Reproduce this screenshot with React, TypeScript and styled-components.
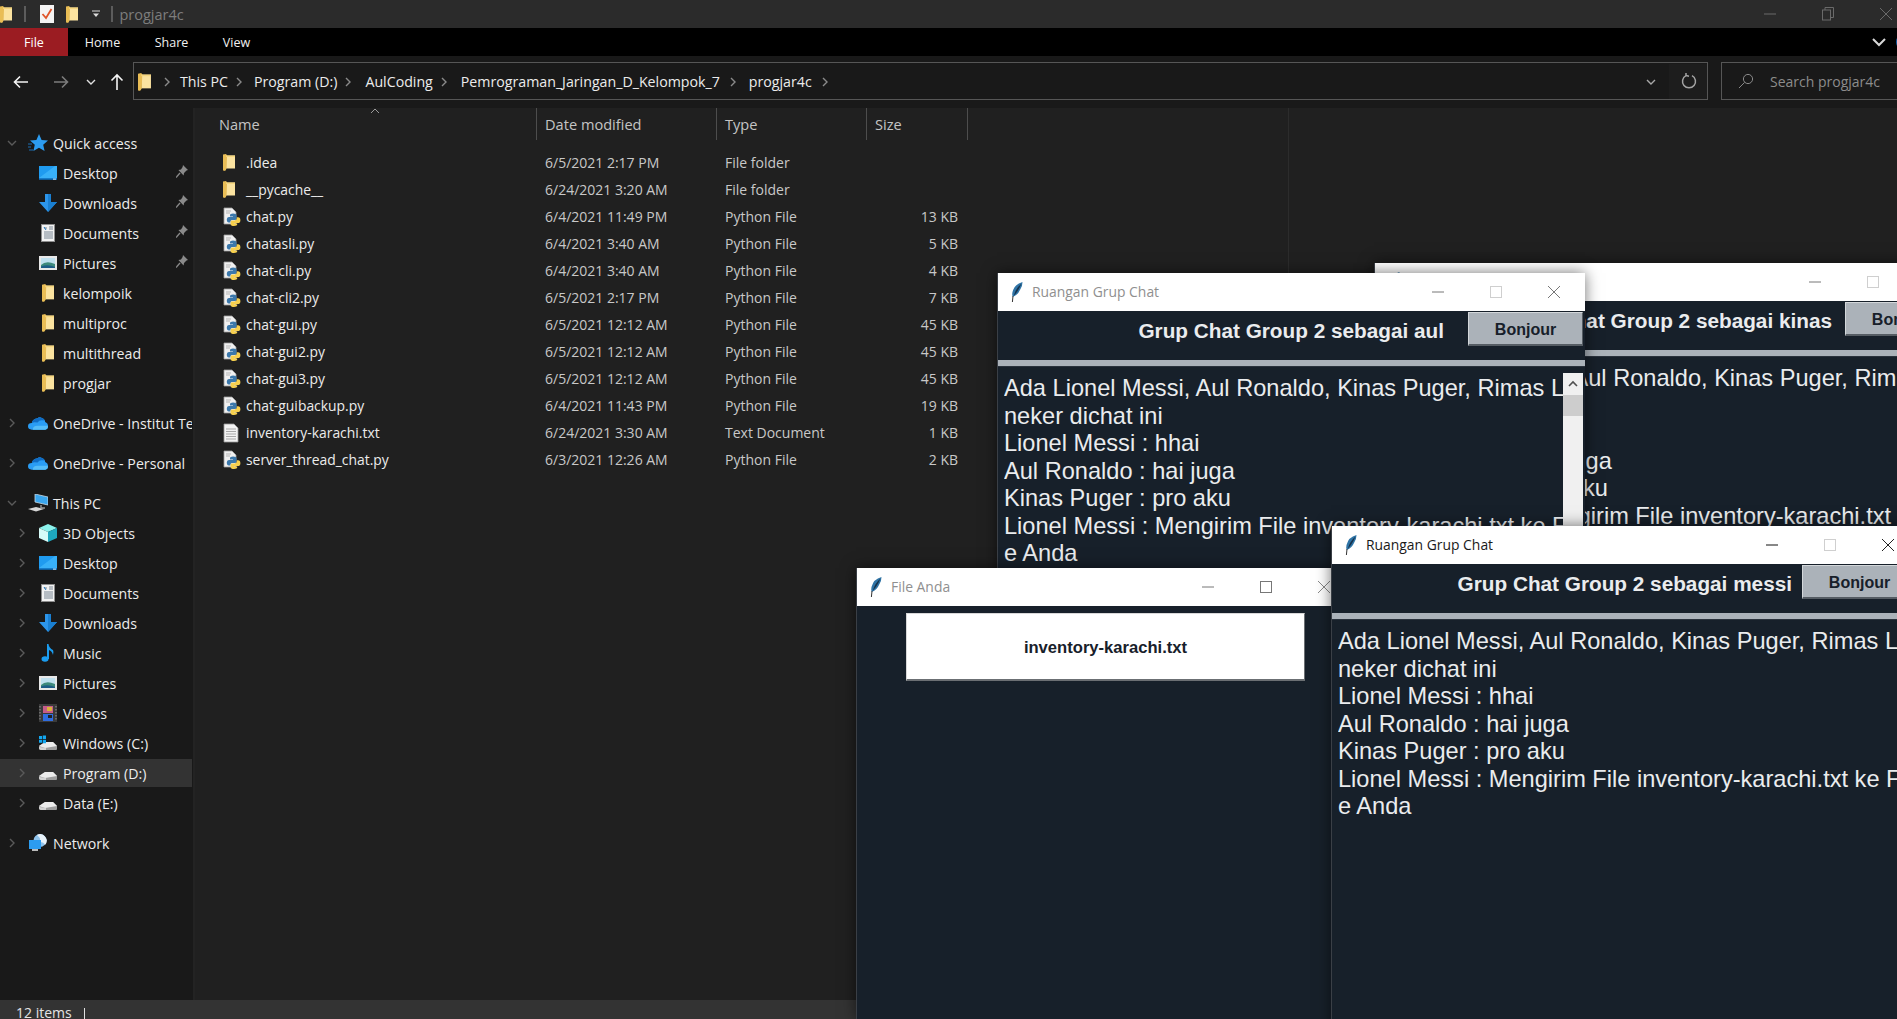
import React from "react";
import styled, { createGlobalStyle } from "styled-components";

const Global = createGlobalStyle`
  html, body { margin: 0; padding: 0; background: #202020; overflow: hidden; }
  * { box-sizing: border-box; }
`;

const UI = `"Open Sans", "Noto Sans", sans-serif`;
const TK = `"Liberation Sans", Arial, sans-serif`;

const Page = styled.div`
  position: relative; width: 1897px; height: 1019px; overflow: hidden;
  display: flex; flex-direction: column; background: #202020; font-family: ${UI}; font-size: 14px; color: #e6e6e6;
`;
const TitleBar = styled.div`
  height: 28px; flex: none; background: #2b2b2b; display: flex; align-items: center; position: relative;
`;
const QuickTools = styled.div`display: flex; align-items: center; flex: none;`;
const ToolSep = styled.span<{ $ml: number }>`
  width: 2px; height: 16px; background: #5c5c5c; margin-left: ${p => p.$ml}px; flex: none;
`;
const ToolIcon = styled.span<{ $ml: number }>`display: flex; margin-left: ${p => p.$ml}px; flex: none;`;
const TitleText = styled.span`font-size: 14.5px; color: #7d7d7d; margin-left: 6px;`;
const WinControls = styled.div`margin-left: auto; display: flex; align-items: center; flex: none; margin-right: -18px;`;
const WinSlot = styled.span`width: 58px; display: flex; justify-content: center; align-items: center; flex: none;`;

const Ribbon = styled.div`height: 28px; flex: none; background: #000; display: flex; align-items: center; position: relative;`;
const FileTab = styled.div`
  width: 68px; height: 28px; background: #9b1c22; color: #fff; font-size: 12.5px; display: flex; align-items: center; justify-content: center; flex: none;
`;
const Tab = styled.div<{ $w: number }>`
  width: ${p => p.$w}px; text-align: center; font-size: 12.5px; color: #f0f0f0; flex: none;
`;
const RibbonEnd = styled.div`margin-left: auto; display: flex; align-items: center; margin-right: 11px;`;
const HelpDot = styled.span`
  position: absolute; right: -15px; top: 6px; width: 16px; height: 16px; border-radius: 50%; background: #0f5fa8;
`;

const NavBar = styled.div`
  height: 52px; flex: none; background: #191919; display: flex; align-items: center; padding-bottom: 2px;
`;
const NavButtons = styled.div`width: 133px; flex: none; display: flex; align-items: center; height: 38px; padding-top: 2px;`;
const NavIcon = styled.span<{ $ml: number }>`display: flex; margin-left: ${p => p.$ml}px; flex: none;`;
const AddressBox = styled.div`
  width: 1575px; height: 38px; flex: none; border: 1px solid #565656; background: #191919; display: flex; align-items: center; position: relative; padding-top: 1px;
`;
const Crumb = styled.span<{ $ml: number }>`font-size: 14.2px; color: #ececec; margin-left: ${p => p.$ml}px; white-space: nowrap; flex: none;`;
const CrumbChevron = styled.span<{ $ml: number }>`display: flex; margin-left: ${p => p.$ml}px; flex: none;`;
const AddressEnd = styled.div`margin-left: auto; display: flex; align-items: center; height: 100%;`;
const AddrDrop = styled.span`display: flex; margin-right: 13px;`;
const RefreshCell = styled.span`
  width: 38px; height: 100%; display: flex; align-items: center; justify-content: center; background: #1d1d1d; padding-left: 2px;
`;
const SearchBox = styled.div`
  margin-left: 13px; width: 200px; height: 38px; flex: none; border: 1px solid #565656; display: flex; align-items: center; padding-left: 16px; color: #8c8c8c; font-size: 14px;
`;
const SearchText = styled.span`margin-left: 16px; white-space: nowrap;`;

const Body = styled.div`flex: 1; min-height: 0; display: flex;`;
const Sidebar = styled.nav`
  width: 195px; flex: none; background: #191919; border-right: 2px solid #232323; padding-top: 21px; overflow: hidden;
`;
const Group = styled.div`padding-bottom: 10px;`;
const NavRow = styled.div<{ $level: number; $selected?: boolean }>`
  height: 28px; margin-bottom: 2px; width: 192px; display: flex; align-items: center; position: relative;
  padding-left: ${p => 4 + p.$level * 10}px;
  background: ${p => (p.$selected ? "#333333" : "transparent")};
  color: #ececec; white-space: nowrap; overflow: hidden; font-size: 14.2px;
`;
const ChevronSlot = styled.span`width: 16px; flex: none; display: flex; justify-content: center;`;
const IconSlot = styled.span`width: 20px; height: 20px; margin-left: 8px; margin-right: 5px; flex: none; display: flex; align-items: center; justify-content: center;`;
const PinSlot = styled.span`position: absolute; left: 176px; top: 6px; display: flex;`;

const Main = styled.main`flex: 1; min-width: 0; display: flex; position: relative;`;
const ListPane = styled.div`width: 1094px; flex: none; border-right: 1px solid #2c2c2c;`;
const HeaderRow = styled.div`
  display: grid; grid-template-columns: 342px 180px 150px 101px; height: 32px;
`;
const HeaderCell = styled.div<{ $pl: number }>`
  border-right: 1px solid #4d4d4d; padding-left: ${p => p.$pl}px; display: flex; align-items: center; color: #c4c4c4; font-size: 14.6px; position: relative;
`;
const SortCaret = styled.span`position: absolute; left: 175px; top: 0px; display: flex;`;
const FileList = styled.div`padding-top: 9px;`;
const FileRow = styled.div`
  display: grid; grid-template-columns: 342px 180px 150px 91px; height: 27px; align-items: center;
`;
const NameCell = styled.div`display: flex; align-items: center; padding-left: 28px; color: #ececec; white-space: nowrap; font-size: 13.9px;`;
const FileIcon = styled.span`width: 18px; height: 20px; flex: none; margin-right: 5px; display: flex; align-items: center; justify-content: flex-start;`;
const DimCell = styled.div<{ $right?: boolean }>`
  padding-left: ${p => (p.$right ? 0 : 8)}px; color: #c8c8c8; text-align: ${p => (p.$right ? "right" : "left")}; white-space: nowrap;
`;
const StatusBar = styled.div`
  height: 19px; flex: none; background: #333333; display: flex; align-items: flex-start; padding-left: 16px; overflow: hidden; color: #e4e4e4;
`;
const StatusText = styled.span`margin-top: 3px; line-height: 19px; font-size: 14px;`;
const StatusSep = styled.span`width: 1px; height: 11px; background: #e0e0e0; margin-left: 12px; margin-top: 8px; flex: none;`;

const TkWindow = styled.section<{ $x: number; $y: number; $w: number; $h: number; $z: number }>`
  position: absolute; left: ${p => p.$x}px; top: ${p => p.$y}px; width: ${p => p.$w}px; height: ${p => p.$h}px; z-index: ${p => p.$z};
  background: #17202a; border-left: 1px solid #3a3f46; box-shadow: 0 0 14px rgba(0,0,0,.55); display: flex; flex-direction: column; overflow: hidden;
`;
const TkTitle = styled.header<{ $active?: boolean }>`
  height: 38px; flex: none; background: #fff; display: flex; align-items: center; padding-left: 13px;
  color: ${p => (p.$active ? "#1a1a1a" : "#8f8f8f")}; font-family: ${UI}; font-size: 13.9px;
`;
const TkTitleText = styled.span`margin-left: 9px; margin-top: -2px; white-space: nowrap;`;
const TkControls = styled.div`margin-left: auto; display: flex; align-items: center; flex: none; margin-right: 2px;`;
const HeadRow = styled.div<{ $gap: number }>`
  height: 49px; flex: none; display: flex; justify-content: flex-end; align-items: flex-start; gap: ${p => p.$gap}px; padding-right: 2px;
  font-family: ${TK};
`;
const HeadLabel = styled.div`
  color: #eaecee; font-weight: 700; font-size: 20.75px; line-height: 24px; margin-top: 8px; white-space: nowrap;
`;
const BonjourButton = styled.div`
  width: 115px; height: 34px; margin-top: 1px; padding-top: 2px; flex: none; background: #abb2b9; color: #17202a; font-weight: 700; font-size: 16px;
  display: flex; align-items: center; justify-content: center; border-top: 1px solid #d3d7da; border-left: 1px solid #d3d7da; border-bottom: 2px solid #555c63; border-right: 1px solid #555c63;
`;
const Rule = styled.div`height: 6px; flex: none; background: #abb2b9;`;
const ChatBody = styled.div`flex: 1; min-height: 0; position: relative; padding: 8px 0 0 6px; font-family: ${TK}; overflow: hidden; border-top: 1px solid #2a323c;`;
const ChatLine = styled.div`color: #eaecee; font-size: 23.6px; line-height: 27.5px; white-space: nowrap; overflow: hidden;`;
const ScrollTrack = styled.div`
  position: absolute; right: 2px; top: 6px; bottom: 0; width: 20px; background: #f0f0f0; display: flex; flex-direction: column; align-items: center;
`;
const ScrollArrow = styled.div`height: 22px; display: flex; align-items: center; justify-content: center;`;
const ScrollThumb = styled.div`width: 100%; height: 21px; background: #cdcdcd;`;
const FileBody = styled.div`flex: 1; background: #17202a; padding: 7px 0 0 49px;`;
const FileButton = styled.div`
  width: 399px; height: 68px; padding-top: 2px; background: #fff; color: #17202a; font-family: ${TK}; font-weight: 700; font-size: 16.6px; display: flex; align-items: center; justify-content: center;
  border-bottom: 2px solid #6b6f73; border-right: 1px solid #6b6f73; border-top: 1px solid #d8d8d8; border-left: 1px solid #d8d8d8;
`;

/* ---------- icons ---------- */
const Folder = ({ h = 18 }: { h?: number }) => (
  <svg width={h * 0.72} height={h} viewBox="0 0 12 17" preserveAspectRatio="none">
    <path d="M3 1.5 H12 V14.5 H3 Z" fill="#fbe3a0" />
    <path d="M0 .6 L3 0 L4 1.5 L3.4 14.5 L2.6 16.4 L.8 17 L0 16 Z" fill="#e9bd55" />
    <path d="M3 1.5 H12 V3 H3 Z" fill="#f5d67f" />
  </svg>
);
const PyFile = () => (
  <svg width="18" height="20" viewBox="0 0 18 20">
    <path d="M1 1 H9 L13 5 V17 H1 Z" fill="#f0f0f0" stroke="#a0a0a0" strokeWidth="0.8" />
    <path d="M3 4H8M3 6H7" stroke="#b5b5b5" />
    <path d="M10 6.5 Q13.5 6.5 13.5 8.5 V11.5 Q13.5 13 11.5 13 H9 Q7.5 13 7.5 14.5 V15.5 H5.8 Q3.8 15.5 3.8 12.5 Q3.8 10 5.8 10 H10 V9.4 H7 V8.2 Q7 6.5 10 6.5Z" fill="#3b78ab" />
    <path d="M11 19 Q7.6 19 7.6 17.2 V14.6 Q7.6 13.4 9.4 13.4 H12 Q13.8 13.4 13.8 11.6 V10.2 H15 Q17.4 10.2 17.4 13.2 Q17.4 16 15 16 H11 V16.6 H14.2 V17.6 Q14.2 19 11 19Z" fill="#f7d04e" />
  </svg>
);
const TxtFile = () => (
  <svg width="16" height="20" viewBox="0 0 16 20">
    <path d="M1 1 H11 L15 5 V19 H1 Z" fill="#f2f2f2" stroke="#9a9a9a" strokeWidth="0.8" />
    <path d="M3 6H13M3 8.5H13M3 11H13M3 13.5H13M3 16H13" stroke="#a8a8a8" />
  </svg>
);
const DesktopIcon = () => (
  <svg width="18" height="14" viewBox="0 0 18 14">
    <rect width="18" height="14" fill="#1f9bf0" />
    <path d="M0 12 L16 0 H18 V12 Z" fill="#38b0f8" />
    <rect y="12.5" width="18" height="1.5" fill="#0c5d9f" />
    <rect x="14" y="12.6" width="3" height="1" fill="#d9eefc" />
  </svg>
);
const DownloadIcon = () => (
  <svg width="18" height="18" viewBox="0 0 18 18">
    <path d="M6 0 H12 V8 H18 L9 18 L0 8 H6 Z" fill="#2c95ea" />
    <path d="M9 0 H12 V8 H18 L9 18 Z" fill="#1a7fd1" />
  </svg>
);
const DocsIcon = () => (
  <svg width="14" height="18" viewBox="0 0 14 18">
    <rect x=".5" y=".5" width="13" height="17" fill="#f2f2f2" stroke="#8d8d8d" />
    <path d="M3 4H6M8 3H12M8 5H12M3 8H12M3 10H12M3 12H12M3 14H12" stroke="#7b8794" />
    <path d="M3 3 L5 6" stroke="#1f7bc4" />
  </svg>
);
const PicturesIcon = () => (
  <svg width="18" height="14" viewBox="0 0 18 14">
    <rect width="18" height="14" fill="#e8e8e8" />
    <rect x="2" y="2" width="14" height="10" fill="#bfe0ef" />
    <path d="M2 9 Q7 4 16 8 V12 H2 Z" fill="#3f8a7c" />
    <path d="M2 10.5 Q9 8 16 11 V12 H2Z" fill="#1d5c87" />
  </svg>
);
const Star = () => (
  <svg width="20" height="18" viewBox="0 0 20 18">
    <path d="M11 0 L13.6 6 L20 6.6 L15.2 10.8 L16.6 17 L11 13.8 L5.4 17 L6.8 10.8 L2 6.6 L8.4 6 Z" fill="#2c9cf0" />
    <path d="M0 10H4M0 13H3M1 16H5" stroke="#1d6fb3" strokeWidth="1" />
  </svg>
);
const Cloud = () => (
  <svg width="21" height="14" viewBox="0 0 21 14">
    <path d="M4 14 Q0 14 0 10.5 Q0 7 4 7 Q5 2.5 10 2 Q12 0 15 2 Q18 3 18 6 Q21 7 21 10.5 Q21 14 18 14 Z" fill="#2a9df4" />
    <path d="M4 7 Q5 2.5 10 2 Q12 0 15 2 Q16.5 2.5 17.5 4.5 Q12 3 10 6.5 Q6 5.5 4 7Z" fill="#0f6cc4" />
    <path d="M5 14 Q5 10 10 10 H21 Q21 14 18 14 Z" fill="#55bdf8" />
  </svg>
);
const PcIcon = () => (
  <svg width="20" height="18" viewBox="0 0 20 18">
    <path d="M7 0 L20 3 V11 L7 8 Z" fill="#3aa6ee" stroke="#c7d9e6" strokeWidth=".8" />
    <path d="M0 15 L8 13 L16 15 L8 17.5 Z" fill="#d6d6d6" />
    <path d="M13 11 V14 H17" stroke="#9b9b9b" strokeWidth="1.4" fill="none" />
  </svg>
);
const Cube = () => (
  <svg width="18" height="18" viewBox="0 0 18 18">
    <path d="M9 0 L18 4 L9 8 L0 4 Z" fill="#8cf2ec" />
    <path d="M0 4 L9 8 V18 L0 14 Z" fill="#d6fbf8" />
    <path d="M18 4 L9 8 V18 L18 14 Z" fill="#1ea7bd" />
  </svg>
);
const MusicIcon = () => (
  <svg width="14" height="18" viewBox="0 0 14 18">
    <ellipse cx="4" cy="15" rx="3.5" ry="2.7" fill="#1b9df0" />
    <path d="M6 15 V0 H7.5 Q8 4 12 6 Q13 8 12 11 Q11 7 8 6 V15 Z" fill="#1b9df0" />
  </svg>
);
const VideoIcon = () => (
  <svg width="18" height="18" viewBox="0 0 18 18">
    <rect width="18" height="18" fill="#3a3a3a" />
    <rect x="4" y="2" width="10" height="7" fill="#c55c8a" />
    <rect x="4" y="10" width="10" height="7" fill="#2f6de0" />
    <rect x="8" y="3" width="5" height="4" fill="#d9b13b" />
    <rect x="9" y="11" width="4" height="3" fill="#222" />
    <path d="M1 2v14M17 2v14" stroke="#888" strokeWidth="1.2" strokeDasharray="1.5 1.5" />
  </svg>
);
const Drive = ({ win }: { win?: boolean }) => (
  <svg width="18" height="16" viewBox="0 0 18 16">
    <path d="M0 11 L6 7 H14 L18 11 V14 Q18 15 17 15 H2 Q0 15 0 13 Z" fill="#9d9d9d" />
    <path d="M0 11 L6 7 H14 L18 11 L6 13 Z" fill="#ececec" />
    <path d="M0 12 L7 13 V15 H2 Q0 15 0 13Z" fill="#d4d4d4" />
    {win && <path d="M0 1h3v3H0zM3.7 .5h3.3v3.5H3.7zM0 4.7h3v3H0zM3.7 4.7h3.3v3.5H3.7z" fill="#13a7f0" />}
  </svg>
);
const NetworkIcon = () => (
  <svg width="18" height="18" viewBox="0 0 18 18">
    <circle cx="11" cy="6.5" r="6.5" fill="#8fc3ec" />
    <path d="M8 1 Q12 4 11 8 Q15 8 16 11 A6.5 6.5 0 0 0 8 1Z" fill="#e8f2fa" />
    <rect x="0" y="6" width="12" height="9" fill="#2c9cf0" />
    <rect x="3" y="15" width="6" height="2" fill="#bcbcbc" />
  </svg>
);
const Pin = () => (
  <svg width="12" height="13" viewBox="0 0 12 13">
    <path d="M7 0 L12 5 L10.5 5.6 L8 8 L7.6 10.4 L2.4 5 L5 4.6 L6.6 2Z" fill="#8a8a8a" />
    <path d="M4 8 L0 12.5" stroke="#8a8a8a" strokeWidth="1.3" />
  </svg>
);
const Chevron = ({ open, c = "#5a5a5a" }: { open?: boolean; c?: string }) => (
  <svg width="10" height="10" viewBox="0 0 10 10">
    <path d={open ? "M1 3 L5 7 L9 3" : "M3 1 L7 5 L3 9"} fill="none" stroke={c} strokeWidth="1.4" />
  </svg>
);
const Feather = () => (
  <svg width="12" height="20" viewBox="0 0 12 20">
    <path d="M11.5 0 Q3.5 2 1.5 10 Q.8 13 1.8 15 Q7 13 9.5 7 Q11.5 3.5 11.5 0Z" fill="#2f74a6" />
    <path d="M10.5 1.5 Q5 6 2.6 14 Q6 10.5 8.4 6Z" fill="#16324c" />
    <path d="M2 14 L1.4 20" stroke="#333" strokeWidth="1" />
  </svg>
);
const Min = ({ c }: { c: string }) => (
  <svg width="12" height="12" viewBox="0 0 12 12"><path d="M0 6H12" stroke={c} strokeWidth="1" /></svg>
);
const Max = ({ c }: { c: string }) => (
  <svg width="12" height="12" viewBox="0 0 12 12"><rect x=".5" y=".5" width="11" height="11" fill="none" stroke={c} /></svg>
);
const Close = ({ c }: { c: string }) => (
  <svg width="14" height="14" viewBox="0 0 14 14"><path d="M1 1L13 13M13 1L1 13" stroke={c} strokeWidth="1" /></svg>
);
const Restore = ({ c }: { c: string }) => (
  <svg width="12" height="14" viewBox="0 0 12 14">
    <rect x=".5" y="3" width="8" height="10" fill="none" stroke={c} />
    <path d="M3 3V.5H11.5V10.5H8.5" fill="none" stroke={c} />
  </svg>
);
const CheckDoc = () => (
  <svg width="14" height="18" viewBox="0 0 14 18">
    <rect width="14" height="18" fill="#f4f4f4" />
    <path d="M2.5 9 L6 13 L11.5 4" fill="none" stroke="#e0552a" strokeWidth="1.8" />
  </svg>
);

/* ---------- data ---------- */
type NavItem = { label: string; level: number; icon: React.ReactNode; chevron?: "open" | "closed"; pin?: boolean; selected?: boolean };
const groups: NavItem[][] = [
  [
    { label: "Quick access", level: 0, icon: <Star />, chevron: "open" },
    { label: "Desktop", level: 1, icon: <DesktopIcon />, pin: true },
    { label: "Downloads", level: 1, icon: <DownloadIcon />, pin: true },
    { label: "Documents", level: 1, icon: <DocsIcon />, pin: true },
    { label: "Pictures", level: 1, icon: <PicturesIcon />, pin: true },
    { label: "kelompoik", level: 1, icon: <Folder /> },
    { label: "multiproc", level: 1, icon: <Folder /> },
    { label: "multithread", level: 1, icon: <Folder /> },
    { label: "progjar", level: 1, icon: <Folder /> },
  ],
  [{ label: "OneDrive - Institut Te", level: 0, icon: <Cloud />, chevron: "closed" }],
  [{ label: "OneDrive - Personal", level: 0, icon: <Cloud />, chevron: "closed" }],
  [
    { label: "This PC", level: 0, icon: <PcIcon />, chevron: "open" },
    { label: "3D Objects", level: 1, icon: <Cube />, chevron: "closed" },
    { label: "Desktop", level: 1, icon: <DesktopIcon />, chevron: "closed" },
    { label: "Documents", level: 1, icon: <DocsIcon />, chevron: "closed" },
    { label: "Downloads", level: 1, icon: <DownloadIcon />, chevron: "closed" },
    { label: "Music", level: 1, icon: <MusicIcon />, chevron: "closed" },
    { label: "Pictures", level: 1, icon: <PicturesIcon />, chevron: "closed" },
    { label: "Videos", level: 1, icon: <VideoIcon />, chevron: "closed" },
    { label: "Windows (C:)", level: 1, icon: <Drive win />, chevron: "closed" },
    { label: "Program (D:)", level: 1, icon: <Drive />, chevron: "closed", selected: true },
    { label: "Data (E:)", level: 1, icon: <Drive />, chevron: "closed" },
  ],
  [{ label: "Network", level: 0, icon: <NetworkIcon />, chevron: "closed" }],
];

const files: [string, string, string, string, "folder" | "py" | "txt"][] = [
  [".idea", "6/5/2021 2:17 PM", "File folder", "", "folder"],
  ["__pycache__", "6/24/2021 3:20 AM", "File folder", "", "folder"],
  ["chat.py", "6/4/2021 11:49 PM", "Python File", "13 KB", "py"],
  ["chatasli.py", "6/4/2021 3:40 AM", "Python File", "5 KB", "py"],
  ["chat-cli.py", "6/4/2021 3:40 AM", "Python File", "4 KB", "py"],
  ["chat-cli2.py", "6/5/2021 2:17 PM", "Python File", "7 KB", "py"],
  ["chat-gui.py", "6/5/2021 12:12 AM", "Python File", "45 KB", "py"],
  ["chat-gui2.py", "6/5/2021 12:12 AM", "Python File", "45 KB", "py"],
  ["chat-gui3.py", "6/5/2021 12:12 AM", "Python File", "45 KB", "py"],
  ["chat-guibackup.py", "6/4/2021 11:43 PM", "Python File", "19 KB", "py"],
  ["inventory-karachi.txt", "6/24/2021 3:30 AM", "Text Document", "1 KB", "txt"],
  ["server_thread_chat.py", "6/3/2021 12:26 AM", "Python File", "2 KB", "py"],
];

const crumbs: [string, number, number][] = [
  ["This PC", 11, 8],
  ["Program (D:)", 6, 10],
  ["AulCoding", 6, 12],
  ["Pemrograman_Jaringan_D_Kelompok_7", 6, 12],
  ["progjar4c", 8, 11],
];

const chatLines = [
  "Ada Lionel Messi, Aul Ronaldo, Kinas Puger, Rimas L",
  "neker dichat ini",
  "Lionel Messi : hhai",
  "Aul Ronaldo : hai juga",
  "Kinas Puger : pro aku",
  "Lionel Messi : Mengirim File inventory-karachi.txt ke F",
  "e Anda",
];

const TkControlsRow = ({ minC, maxC, closeC }: { minC: string; maxC: string; closeC: string }) => (
  <TkControls>
    <WinSlot><Min c={minC} /></WinSlot>
    <WinSlot><Max c={maxC} /></WinSlot>
    <WinSlot><Close c={closeC} /></WinSlot>
  </TkControls>
);

const ChatWindow = ({ x, y, z, who, gap, active, scroll }: { x: number; y: number; z: number; who: string; gap: number; active?: boolean; scroll?: boolean }) => (
  <TkWindow $x={x} $y={y} $w={588} $h={Math.max(1019 - y, 560)} $z={z}>
    <TkTitle $active={active}>
      <Feather />
      <TkTitleText>Ruangan Grup Chat</TkTitleText>
      <TkControlsRow minC={active ? "#111" : "#777"} maxC="#cfcfcf" closeC={active ? "#222" : "#777"} />
    </TkTitle>
    <HeadRow $gap={gap}>
      <HeadLabel>Grup Chat Group 2 sebagai {who}</HeadLabel>
      <BonjourButton>Bonjour</BonjourButton>
    </HeadRow>
    <Rule />
    <ChatBody>
      {chatLines.map((l, i) => <ChatLine key={i}>{l}</ChatLine>)}
      {scroll && (
        <ScrollTrack>
          <ScrollArrow>
            <svg width="10" height="8" viewBox="0 0 10 8"><path d="M1 6 L5 2 L9 6" fill="none" stroke="#505050" strokeWidth="1.6" /></svg>
          </ScrollArrow>
          <ScrollThumb />
        </ScrollTrack>
      )}
    </ChatBody>
  </TkWindow>
);

export default function App() {
  return (
    <Page>
      <Global />
      <TitleBar>
        <QuickTools>
          <ToolIcon $ml={0}><Folder h={17} /></ToolIcon>
          <ToolSep $ml={12} />
          <ToolIcon $ml={14}><CheckDoc /></ToolIcon>
          <ToolIcon $ml={12}><Folder h={17} /></ToolIcon>
          <ToolIcon $ml={14}>
            <svg width="8" height="8" viewBox="0 0 8 8"><path d="M0 1H8" stroke="#ddd" /><path d="M1 3.5H7L4 7Z" fill="#ddd" /></svg>
          </ToolIcon>
          <ToolSep $ml={11} />
        </QuickTools>
        <TitleText>progjar4c</TitleText>
        <WinControls>
          <WinSlot><Min c="#6a6a6a" /></WinSlot>
          <WinSlot><Restore c="#6a6a6a" /></WinSlot>
          <WinSlot><Close c="#6a6a6a" /></WinSlot>
        </WinControls>
      </TitleBar>
      <Ribbon>
        <FileTab>File</FileTab>
        <Tab $w={69}>Home</Tab>
        <Tab $w={69}>Share</Tab>
        <Tab $w={61}>View</Tab>
        <RibbonEnd>
          <svg width="14" height="9" viewBox="0 0 14 9"><path d="M1 1 L7 7 L13 1" fill="none" stroke="#d8d8d8" strokeWidth="2" /></svg>
        </RibbonEnd>
        <HelpDot />
      </Ribbon>
      <NavBar>
        <NavButtons>
          <NavIcon $ml={13}>
            <svg width="16" height="14" viewBox="0 0 16 14"><path d="M15 7H2M7 1.5 L1.5 7 L7 12.5" fill="none" stroke="#f4f4f4" strokeWidth="1.6" /></svg>
          </NavIcon>
          <NavIcon $ml={24}>
            <svg width="16" height="14" viewBox="0 0 16 14"><path d="M1 7H14M9 1.5 L14.5 7 L9 12.5" fill="none" stroke="#7c7c7c" strokeWidth="1.6" /></svg>
          </NavIcon>
          <NavIcon $ml={17}><Chevron open c="#e0e0e0" /></NavIcon>
          <NavIcon $ml={14}>
            <svg width="14" height="18" viewBox="0 0 14 18"><path d="M7 17V2M1.5 7.5 L7 2 L12.5 7.5" fill="none" stroke="#f4f4f4" strokeWidth="1.6" /></svg>
          </NavIcon>
        </NavButtons>
        <AddressBox>
          <NavIcon $ml={4}><Folder h={18} /></NavIcon>
          {crumbs.map(([text, ml, tl]) => (
            <React.Fragment key={text}>
              <CrumbChevron $ml={ml}><Chevron c="#8a8a8a" /></CrumbChevron>
              <Crumb $ml={tl}>{text}</Crumb>
            </React.Fragment>
          ))}
          <CrumbChevron $ml={8}><Chevron c="#8a8a8a" /></CrumbChevron>
          <AddressEnd>
            <AddrDrop><Chevron open c="#a8a8a8" /></AddrDrop>
            <RefreshCell>
              <svg width="16" height="17" viewBox="0 0 16 17"><path d="M5 2.6 A6.5 6.5 0 1 0 11 2.6 M11 2.6 V0 M11 2.6 L8 3.2" fill="none" stroke="#a4a4a4" strokeWidth="1.5" transform="matrix(-1 0 0 1 16 0)" /></svg>
            </RefreshCell>
          </AddressEnd>
        </AddressBox>
        <SearchBox>
          <svg width="16" height="16" viewBox="0 0 16 16"><circle cx="10" cy="6" r="4.6" fill="none" stroke="#8a8a8a" /><path d="M6.6 9.4 L1 15" stroke="#8a8a8a" /></svg>
          <SearchText>Search progjar4c</SearchText>
        </SearchBox>
      </NavBar>
      <Body>
        <Sidebar>
          {groups.map((g, i) => (
            <Group key={i}>
              {g.map(item => (
                <NavRow key={item.label + item.level} $level={item.level} $selected={item.selected}>
                  <ChevronSlot>{item.chevron && <Chevron open={item.chevron === "open"} />}</ChevronSlot>
                  <IconSlot>{item.icon}</IconSlot>
                  <span>{item.label}</span>
                  {item.pin && <PinSlot><Pin /></PinSlot>}
                </NavRow>
              ))}
            </Group>
          ))}
        </Sidebar>
        <Main>
          <ListPane>
            <HeaderRow>
              <HeaderCell $pl={24}>
                Name
                <SortCaret>
                  <svg width="10" height="6" viewBox="0 0 10 6"><path d="M1 5 L5 1 L9 5" fill="none" stroke="#9a9a9a" /></svg>
                </SortCaret>
              </HeaderCell>
              <HeaderCell $pl={8}>Date modified</HeaderCell>
              <HeaderCell $pl={8}>Type</HeaderCell>
              <HeaderCell $pl={8}>Size</HeaderCell>
            </HeaderRow>
            <FileList>
              {files.map(([name, date, type, size, kind]) => (
                <FileRow key={name}>
                  <NameCell>
                    <FileIcon>{kind === "folder" ? <Folder h={17} /> : kind === "py" ? <PyFile /> : <TxtFile />}</FileIcon>
                    {name}
                  </NameCell>
                  <DimCell>{date}</DimCell>
                  <DimCell>{type}</DimCell>
                  <DimCell $right>{size}</DimCell>
                </FileRow>
              ))}
            </FileList>
          </ListPane>
        </Main>
      </Body>
      <StatusBar>
        <StatusText>12 items</StatusText>
        <StatusSep />
      </StatusBar>

      <ChatWindow x={1374} y={263} z={1} who="kinas" gap={13} />
      <ChatWindow x={997} y={273} z={2} who="aul" gap={24} scroll />
      <TkWindow $x={856} $y={568} $w={499} $h={451} $z={3}>
        <TkTitle>
          <Feather />
          <TkTitleText>File Anda</TkTitleText>
          <TkControlsRow minC="#777" maxC="#777" closeC="#888" />
        </TkTitle>
        <FileBody>
          <FileButton>inventory-karachi.txt</FileButton>
        </FileBody>
      </TkWindow>
      <ChatWindow x={1331} y={526} z={4} who="messi" gap={10} active />
    </Page>
  );
}
